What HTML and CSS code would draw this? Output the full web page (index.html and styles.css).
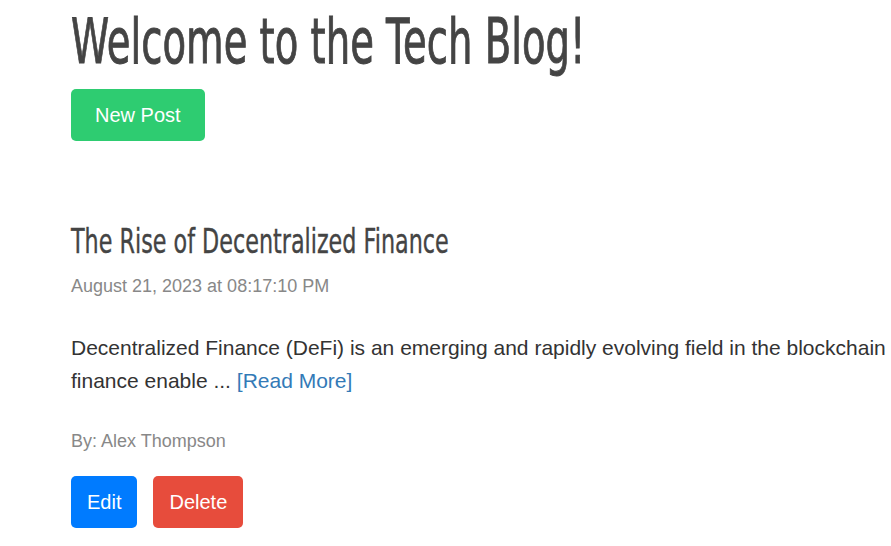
FILE: index.html
```html
<!DOCTYPE html>
<html lang="en">
<head>
<meta charset="utf-8">
<title>Tech Blog</title>
<link rel="stylesheet" href="styles.css">
</head>
<body>
<main class="container">
  <h1 class="site-title">Welcome to the Tech Blog!</h1>
  <a class="btn btn-green btn-new" href="#">New Post</a>

  <article class="post">
    <h2 class="post-title">The Rise of Decentralized Finance</h2>
    <p class="post-date">August 21, 2023 at 08:17:10 PM</p>
    <p class="post-body">Decentralized Finance (DeFi) is an emerging and rapidly evolving field in the blockchain space. Decentralized<br>finance enable ... <a class="read-more" href="#">[Read More]</a></p>
    <p class="post-author">By: Alex Thompson</p>
    <div class="post-actions">
      <a class="btn btn-blue" href="#">Edit</a>
      <a class="btn btn-red" href="#">Delete</a>
    </div>
  </article>
</main>
</body>
</html>
```

FILE: styles.css
```css
html, body {
  margin: 0;
  padding: 0;
  overflow: hidden;
  background: #ffffff;
}

body {
  font-family: "Liberation Sans", Arial, sans-serif;
  color: #333333;
}

.container {
  width: 1100px;
  padding: 0 0 0 71px;
}

.site-title {
  font-family: "DejaVu Sans", sans-serif;
  font-weight: 400;
  font-size: 63px;
  line-height: 80px;
  color: #444444;
  -webkit-text-stroke: 1px #444444;
  margin: 0 0 7px 0;
  padding-top: 2px;
  transform: scaleX(0.612);
  transform-origin: left center;
  white-space: nowrap;
}

.btn {
  display: inline-flex;
  align-items: center;
  justify-content: center;
  height: 52px;
  box-sizing: border-box;
  border-radius: 5px;
  color: #ffffff;
  text-decoration: none;
  font-size: 20px;
  padding: 0 16px;
}

.btn-new {
  padding: 0 24px;
}

.btn-green { background: #2ecc71; }
.btn-blue { background: #007bff; }
.btn-red { background: #e74c3c; }

.post {
  margin-top: 80px;
}

.post-title {
  font-family: "DejaVu Sans", sans-serif;
  font-weight: 400;
  font-size: 34px;
  line-height: 40px;
  color: #444444;
  -webkit-text-stroke: 0.4px #444444;
  margin: 0;
  transform: scaleX(0.655);
  transform-origin: left center;
  white-space: nowrap;
}

.post-date {
  font-size: 18px;
  line-height: 21px;
  color: #888888;
  margin: 15px 0 0 0;
}

.post-body {
  font-size: 21px;
  line-height: 33px;
  color: #333333;
  margin: 34px 0 0 0;
  white-space: nowrap;
}

.read-more {
  color: #337ab7;
  text-decoration: none;
}

.post-author {
  font-size: 18px;
  line-height: 21px;
  color: #888888;
  margin: 34px 0 0 0;
}

.post-actions {
  display: flex;
  gap: 16px;
  margin-top: 24px;
}
```
